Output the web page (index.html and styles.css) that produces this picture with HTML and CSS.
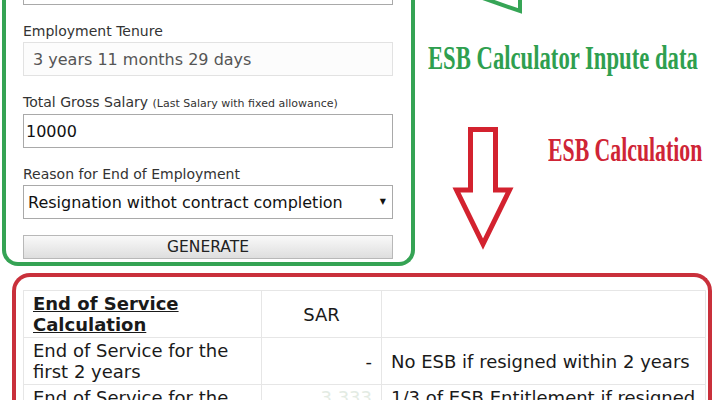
FILE: index.html
```html
<!DOCTYPE html>
<html lang="en">
<head>
<meta charset="utf-8">
<title>ESB Calculator</title>
<link rel="stylesheet" href="styles.css">
</head>
<body>
<div class="page">
  <div class="top">
    <form class="calc">
      <input class="field-input first" type="text" value="" aria-label="Date">
      <div class="field">
        <label class="field-label">Employment Tenure</label>
        <input class="field-input readonly" type="text" value="3 years 11 months 29 days" readonly>
      </div>
      <div class="field">
        <label class="field-label">Total Gross Salary <small class="hint">(Last Salary with fixed allowance)</small></label>
        <input class="field-input" type="text" value="10000">
      </div>
      <div class="field">
        <label class="field-label">Reason for End of Employment</label>
        <div class="select-box">
          <span class="select-text">Resignation withot contract completion</span>
          <span class="select-arrow">▼</span>
        </div>
      </div>
      <button class="generate" type="button">GENERATE</button>
    </form>
    <div class="annot">
      <svg class="arrows" width="304" height="266" viewBox="0 0 304 266">
        <polyline points="62,-4 105,11 105,-4" fill="none" stroke="#36a556" stroke-width="4" stroke-linejoin="miter"/>
        <polygon points="55.5,129.5 80.5,129.5 80.5,190 94.5,190 68,244 41.5,190 55.5,190" fill="none" stroke="#d3222f" stroke-width="5" stroke-linejoin="miter"/>
      </svg>
      <div class="note note-green">ESB Calculator Inpute data</div>
      <div class="note note-red">ESB Calculation</div>
    </div>
  </div>
  <section class="result">
    <table class="esb">
      <colgroup>
        <col class="c1"><col class="c2"><col class="c3">
      </colgroup>
      <tr>
        <th class="head">End of Service<br>Calculation</th>
        <td class="sar">SAR</td>
        <td></td>
      </tr>
      <tr>
        <td>End of Service for the<br>first 2 years</td>
        <td class="amount">-</td>
        <td>No ESB if resigned within 2 years</td>
      </tr>
      <tr>
        <td>End of Service for the</td>
        <td class="amount faint">3,333</td>
        <td>1/3 of ESB Entitlement if resigned</td>
      </tr>
    </table>
  </section>
</div>
</body>
</html>
```

FILE: styles.css
```css
* { box-sizing: border-box; }

html, body {
  margin: 0;
  padding: 0;
  background: #ffffff;
}

body {
  width: 719px;
  height: 400px;
  overflow: hidden;
  font-family: "DejaVu Sans", Verdana, sans-serif;
  color: #222;
}

.page {
  width: 719px;
  height: 400px;
  overflow: hidden;
}

.top {
  display: flex;
  align-items: flex-start;
  height: 266px;
}

.calc {
  margin: 0 0 0 2px;
  width: 413px;
  height: 266px;
  border: 4px solid #35a354;
  border-top: none;
  border-radius: 0 0 16px 16px;
  padding: 0 18px 0 17px;
  display: flex;
  flex-direction: column;
}

.field {
  margin-top: 18px;
  display: flex;
  flex-direction: column;
}

.field-label {
  font-size: 14px;
  line-height: 17px;
  color: #333;
  margin-bottom: 2px;
  white-space: nowrap;
}

.hint {
  font-size: 11px;
}

.field-input {
  display: block;
  width: 370px;
  height: 34px;
  margin: 0;
  border: 1px solid #a9a9a9;
  background: #fff;
  font-family: "DejaVu Sans", Verdana, sans-serif;
  font-size: 16px;
  color: #111;
  padding: 0 2px;
  outline: none;
}

.field-input.first {
  margin-top: -29px;
  flex: none;
}

.field-input.readonly {
  border-color: #e2e2e2;
  background: #fcfcfc;
  color: #555;
  padding-left: 9px;
}

.select-box {
  width: 370px;
  height: 34px;
  border: 1px solid #a9a9a9;
  background: #fff;
  display: flex;
  align-items: center;
  justify-content: space-between;
  padding: 0 6px 0 4px;
  font-size: 16px;
  color: #111;
}

.select-arrow {
  font-size: 8px;
  color: #111;
  margin-top: -2px;
}

.generate {
  margin-top: 16px;
  width: 370px;
  height: 24px;
  border: 1px solid #b8b8b8;
  background: linear-gradient(#f9f9f9, #dedede);
  font-family: "DejaVu Sans", Verdana, sans-serif;
  font-size: 15.5px;
  line-height: 22px;
  color: #222;
  padding: 0;
}

.annot {
  position: relative;
  flex: 1;
  height: 266px;
}

.arrows {
  position: absolute;
  left: 0;
  top: 0;
  overflow: visible;
}

.note {
  position: absolute;
  font-family: "Liberation Serif", "Times New Roman", serif;
  font-weight: bold;
  font-size: 33px;
  line-height: 33px;
  white-space: nowrap;
  transform-origin: 0 0;
}

.note-green {
  left: 13px;
  top: 42px;
  color: #2f9f4f;
  transform: scaleX(0.687);
}

.note-red {
  left: 133px;
  top: 134px;
  color: #cf2536;
  transform: scaleX(0.66);
}

.result {
  margin: 7px 0 0 12px;
  width: 700px;
  height: 127px;
  border: 4px solid #c9303b;
  border-bottom: none;
  border-radius: 18px 18px 0 0;
  padding: 13px 2px 0 7px;
}

.esb {
  width: 100%;
  border-collapse: collapse;
  table-layout: fixed;
  font-size: 18px;
  line-height: 21px;
  color: #1a1a1a;
}

.c1 { width: 238px; }
.c2 { width: 120px; }

.esb th,
.esb td {
  border: 1px solid #e6e6e6;
  padding: 2px 9px;
  vertical-align: middle;
  text-align: left;
  font-weight: normal;
}

.esb th.head {
  font-weight: bold;
  text-decoration: underline;
}

.esb td.sar {
  text-align: center;
}

.esb td.amount {
  text-align: right;
}

.esb td.faint {
  color: #e3ebe3;
}
```
